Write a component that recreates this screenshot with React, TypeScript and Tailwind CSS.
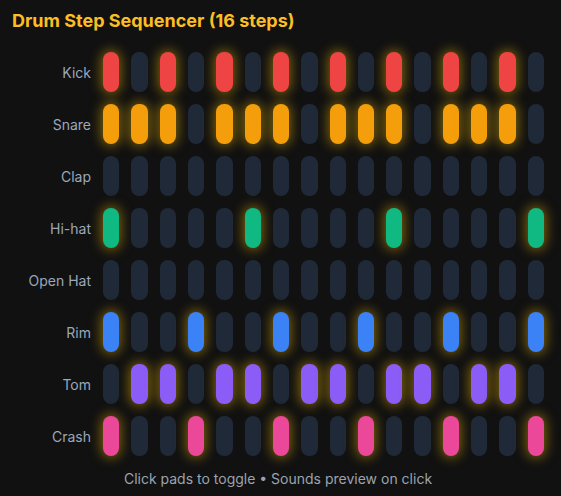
import React from "react";

type Row = { name: string; on: string; steps: number[] };

const rows: Row[] = [
  { name: "Kick", on: "bg-[#ef4444]", steps: [0, 2, 4, 6, 8, 10, 12, 14] },
  { name: "Snare", on: "bg-[#f59e0b]", steps: [0, 1, 2, 4, 5, 6, 8, 9, 10, 12, 13, 14] },
  { name: "Clap", on: "bg-[#f97316]", steps: [] },
  { name: "Hi-hat", on: "bg-[#10b981]", steps: [0, 5, 10, 15] },
  { name: "Open Hat", on: "bg-[#06b6d4]", steps: [] },
  { name: "Rim", on: "bg-[#3b82f6]", steps: [0, 3, 6, 9, 12, 15] },
  { name: "Tom", on: "bg-[#8b5cf6]", steps: [1, 2, 4, 5, 7, 8, 10, 11, 13, 14] },
  { name: "Crash", on: "bg-[#ec4899]", steps: [0, 3, 6, 9, 12, 15] },
];

export default function App() {
  const [grid, setGrid] = React.useState(() =>
    rows.map((r) => Array.from({ length: 16 }, (_, i) => r.steps.includes(i)))
  );
  const toggle = (r: number, c: number) =>
    setGrid((g) => g.map((row, ri) => (ri === r ? row.map((v, ci) => (ci === c ? !v : v)) : row)));

  return (
    <div
      className="min-h-[496px] w-[561px] bg-[#111111] pl-3 pt-[11px]"
      style={{ fontFamily: "Inter, 'Noto Sans', sans-serif" }}
    >
      <div className="w-[532px]">
        <h1 className="text-[18px] font-bold leading-[20px] text-[#fbbf24]">
          Drum Step Sequencer (16 steps)
        </h1>
        <div className="mt-[21px] grid grid-cols-[79px_repeat(16,minmax(0,1fr))] gap-x-3 gap-y-3">
          {rows.map((r, ri) => (
            <React.Fragment key={r.name}>
              <div className="flex h-10 items-center justify-end text-[14px] text-[#9aa8ba]">
                {r.name}
              </div>
              {grid[ri].map((v, ci) => (
                <button
                  key={ci}
                  onClick={() => toggle(ri, ci)}
                  className={
                    "h-10 rounded-lg " +
                    (v
                      ? r.on + " shadow-[0_0_12px_2px_rgba(234,179,8,0.5)]"
                      : "bg-[#1f2937]")
                  }
                />
              ))}
            </React.Fragment>
          ))}
        </div>
        <p className="mt-[12px] text-center text-[14px] text-[#9ca3af]">
          Click pads to toggle • Sounds preview on click
        </p>
      </div>
    </div>
  );
}
